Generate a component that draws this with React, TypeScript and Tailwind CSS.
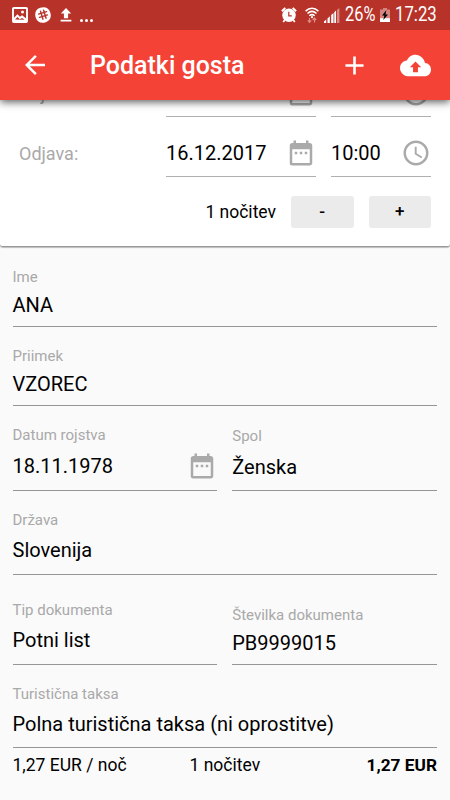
import { clsx } from "clsx"
import { ReactNode } from "react"
import { MdAccessTime, MdAdd, MdArrowBack, MdDateRange } from "react-icons/md"

const PhotoIcon = () => (
  <svg className="size-4" viewBox="0 0 16 16" fill="none">
    <rect x="1" y="1" width="14" height="14" rx="0.8" stroke="white" strokeWidth="1.9" />
    <path d="M1.5 11.2 5.4 7.2l2.5 2.6 2.2-1.6 4.4 3.6v2.4h-13z" fill="white" />
    <path d="m3 12.6 2.5-2.7 2.3 2.4 2.3-1.4 2.5 1.8z" fill="#b7332a" />
    <circle cx="10.5" cy="5" r="1.5" fill="white" />
  </svg>
)

const SlackIcon = () => (
  <svg className="size-4" viewBox="0 0 16 16" fill="none">
    <path
      d="M5.2.8C9.8-.7 13.6.6 15.2 5.2c1.5 4.6.2 8.4-4.4 10-4.6 1.5-8.4.2-10-4.4C-.7 6.2.6 2.4 5.2.8Z"
      fill="white"
    />
    <path
      d="m5.5 4.2 2.5 8M8.6 3.2l2.5 8M3.6 7.1l8-2.5M4.5 10.4l8-2.5"
      stroke="#b7332a"
      strokeWidth="1.4"
      strokeLinecap="round"
    />
  </svg>
)

const UploadIcon = () => (
  <svg className="h-[14px] w-3" viewBox="0 0 12 14" fill="white">
    <path d="M6 0 .8 5.4h3.1v4.8h4.2V5.4h3.1zM.6 11.7h10.8v1.9H.6z" />
  </svg>
)

const AlarmIcon = () => (
  <svg className="size-4" viewBox="0 0 16 16" fill="none">
    <path d="m3.7 13-1.5 2M12.3 13l1.5 2" stroke="white" strokeWidth="1.7" />
    <path d="M.9 4.2 4.3.9M15.1 4.2 11.7.9" stroke="white" strokeWidth="2" />
    <circle cx="8" cy="8.3" r="6.7" fill="white" />
    <path d="M7.8 4.8v4h3" stroke="#b7332a" strokeWidth="1.2" />
  </svg>
)

const WifiIcon = () => (
  <svg className="h-[17px] w-[14px]" viewBox="0 0 14 17" fill="none">
    <path
      d="M.6 4.1c3.8-3.7 9-3.7 12.8 0M2.5 6.5c2.8-2.6 6.2-2.6 9 0M4.3 8.8c1.7-1.5 3.7-1.5 5.4 0"
      stroke="white"
      strokeWidth="1.5"
    />
    <circle cx="7" cy="10.2" r="1.1" fill="white" />
    <path
      d="M4.5 11v4M9.5 11.5v4M2.8 13.3l1.7 2 1.7-2M7.8 13l1.7-2 1.7 2"
      stroke="#e08a83"
      strokeWidth="1.2"
    />
  </svg>
)

const SignalIcon = () => (
  <svg className="h-[15px] w-4" viewBox="0 0 16 15">
    <path d="M0 15v-1.5l2.2-2V15zM3.5 15v-4.6l2.3-2.1V15zM7.2 15V7.1l2.3-2.2V15z" fill="white" />
    <path d="M10.3 15V4.2l1.7-1.6V15z" fill="white" />
    <path d="M12.9 15V1.9L15.4 0v15z" fill="#d58a84" />
  </svg>
)

const BatteryIcon = () => (
  <svg className="h-[14px] w-[10px]" viewBox="0 0 10 14">
    <path d="M3 0h4v1.6h3V14H0V1.6h3z" fill="#d4857f" />
    <path d="M0 10.2h10V14H0z" fill="white" />
    <path d="M6.3 2.2 2 7.6h2.4L3.3 12 8 6.5H5.5z" fill="black" />
  </svg>
)

const CloudIcon = () => (
  <svg className="size-[31px]" viewBox="0 0 24 24" fill="white">
    <path
      fillRule="evenodd"
      d="M19.35 10.04C18.67 6.59 15.64 3.7 12 3.7S6.6 5.64 5.35 8.04C2.34 8.36 0 10.91 0 14s2.69 6.3 6 6.3h13c2.76 0 5-2.24 5-5.3 0-2.64-2.05-4.78-4.65-4.96ZM13.9 13.3v3.9h-3.8v-3.9H7.6L12 8.9l4.4 4.4Z"
    />
  </svg>
)

const StatusBar = () => (
  <div className="flex h-[30px] items-center bg-[#b7332a] pr-[13px] pl-3 text-white">
    <div className="flex items-center">
      <PhotoIcon />
      <span className="ml-[7px]">
        <SlackIcon />
      </span>
      <span className="ml-[9px]">
        <UploadIcon />
      </span>
      <span className="mt-[11px] ml-2 flex gap-[2px]">
        <i className="size-[3px] rounded-full bg-white" />
        <i className="size-[3px] rounded-full bg-white" />
        <i className="size-[3px] rounded-full bg-white" />
      </span>
    </div>
    <div className="ml-auto flex items-center">
      <AlarmIcon />
      <span className="ml-2">
        <WifiIcon />
      </span>
      <span className="ml-[5px]">
        <SignalIcon />
      </span>
      <span className="ml-[5px] w-[31px] origin-left scale-x-[0.84] text-[19.5px] leading-[30px]">
        26%
      </span>
      <span className="ml-[4px]">
        <BatteryIcon />
      </span>
      <span className="ml-[5px] w-[42px] origin-left scale-x-[0.86] text-[19.5px] leading-[30px]">
        17:23
      </span>
    </div>
  </div>
)

const AppBar = () => (
  <div className="flex h-[70px] items-center bg-[#f44336] pr-[19px] pl-5 text-white">
    <MdArrowBack className="size-[30px]" />
    <h1 className="mt-0.5 ml-10 text-[25px] leading-[30px] font-medium">Podatki gosta</h1>
    <MdAdd className="mr-[30px] ml-auto size-[31px]" />
    <CloudIcon />
  </div>
)

interface StayRowProps {
  label: string
  date: string
  time: string
}

const StayRow = ({ label, date, time }: StayRowProps) => (
  <div className="flex h-[60px] pr-[19px] pl-[19px] text-xl">
    <span className="w-[147px] pt-[25px] text-lg leading-6 text-[#a9a9a9]">{label}</span>
    <div className="flex w-[150px] justify-between border-b border-[#b0b0b0] pt-[21px]">
      <span className="leading-[30px]">{date}</span>
      <MdDateRange className="size-[30px] text-[#aaa]" />
    </div>
    <div className="ml-[15px] flex w-[100px] justify-between border-b border-[#b0b0b0] pt-[21px]">
      <span className="leading-[30px]">{time}</span>
      <MdAccessTime className="size-[30px] text-[#aaa]" />
    </div>
  </div>
)

const StepButton = ({ children }: { children: ReactNode }) => (
  <button className="h-8 w-[62.5px] rounded-[3px] bg-[#ebebeb] text-[17px] font-medium">
    {children}
  </button>
)

interface FieldProps {
  label: string
  value: string
  className: string
  icon?: ReactNode
}

const Field = ({ label, value, className, icon }: FieldProps) => (
  <div className={clsx("flex flex-1 flex-col border-b border-[#969696]", className)}>
    <span className="text-[15px] leading-5 text-[#a9a9a9]">{label}</span>
    <div className="flex h-6 items-center justify-between text-xl leading-6">
      <span>{value}</span>
      {icon}
    </div>
  </div>
)

export default function App() {
  return (
    <div className="flex h-[800px] w-[450px] flex-col overflow-hidden bg-[#fafafa] font-[Roboto,sans-serif] text-black">
      <header className="relative z-10 shadow-[0_2px_8px_rgba(0,0,0,0.65)]">
        <StatusBar />
        <AppBar />
      </header>

      <section className="-mt-[43px] h-[190px] shrink-0 rounded-b-[3px] border-b border-[#999] bg-white shadow-[0_1px_1px_rgba(0,0,0,0.25)]">
        <StayRow label="Prijava:" date="15.12.2017" time="14:00" />
        <StayRow label="Odjava:" date="16.12.2017" time="10:00" />
        <div className="mt-[19px] flex items-center justify-end gap-[15px] pr-[19px]">
          <span className="pt-px text-[17.5px]">1 nočitev</span>
          <StepButton>-</StepButton>
          <StepButton>+</StepButton>
        </div>
      </section>

      <main className="flex flex-col pt-[1px] pr-[13px] pl-[12.5px]">
        <div className="flex h-[79px]">
          <Field label="Ime" value="ANA" className="gap-[6px] pt-[19px]" />
        </div>
        <div className="flex h-[79px]">
          <Field label="Priimek" value="VZOREC" className="gap-[6px] pt-[19px]" />
        </div>
        <div className="flex h-[85px] gap-[15px]">
          <Field
            label="Datum rojstva"
            value="18.11.1978"
            className="gap-[9px] pt-[19px]"
            icon={<MdDateRange className="size-[30px] text-[#aaa]" />}
          />
          <Field label="Spol" value="Ženska" className="gap-[9px] pt-5" />
        </div>
        <div className="flex h-[84px]">
          <Field label="Država" value="Slovenija" className="gap-2 pt-[19px]" />
        </div>
        <div className="flex h-[90px] gap-[15px]">
          <Field label="Tip dokumenta" value="Potni list" className="gap-2 pt-[25px]" />
          <Field label="Številka dokumenta" value="PB9999015" className="gap-[6px] pt-[30px]" />
        </div>
        <div className="flex h-[83px]">
          <Field
            label="Turistična taksa"
            value="Polna turistična taksa (ni oprostitve)"
            className="gap-2 pt-[19px]"
          />
        </div>
        <div className="flex pt-[5px] text-[17.5px] leading-6">
          <span className="w-[177px]">1,27 EUR / noč</span>
          <span>1 nočitev</span>
          <span className="ml-auto text-[17.3px] font-bold">1,27 EUR</span>
        </div>
      </main>
    </div>
  )
}
